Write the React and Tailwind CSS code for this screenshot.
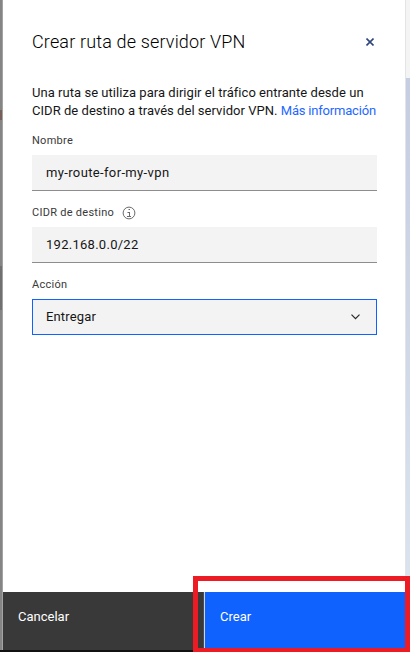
import React from "react";

function Label({ children }) {
  return <div className="flex h-[15px] items-center whitespace-nowrap text-[11px] leading-[15px] tracking-[0.27px] text-[#393939]">{children}</div>;
}

function InfoIcon() {
  return (
    <svg className="ml-[8px] h-[14px] w-[14px]" viewBox="0 0 14 14" fill="none" stroke="#6b6b6b" strokeWidth="1">
      <circle cx="7" cy="7" r="5.9" />
      <path d="M5.5 6.5h2M7.5 6v4M5 10.5h4M6.5 3.5h1.5" />
    </svg>
  );
}

export default function App() {
  return (
    <div className="relative flex h-[652px] w-[410px] flex-col overflow-hidden bg-white font-['Roboto',sans-serif] text-[#161616]">
      <div className="flex h-[650px]">
        <div className="flex w-[3px] shrink-0 flex-col border-r border-[#a3a3a3] bg-[#858585]">
          <div className="mt-[110px] h-[10px] w-[2px] bg-[#77605a]" />
          <div className="mt-[146px] h-[44px] w-[2px] bg-[#707070]" />
        </div>
        <div className="flex w-[402px] shrink-0 flex-col">
          <main className="flex h-[592px] flex-col pl-[29px] pr-[28px] pt-[30px]">
            <header className="flex h-[24px] items-center justify-between">
              <h1 className="whitespace-nowrap text-[18px] font-light leading-[24px] tracking-[0.16px] text-black">Crear ruta de servidor VPN</h1>
              <svg className="mr-[3px] h-[8px] w-[8px]" viewBox="0 0 8 8" stroke="#2f477c" strokeWidth="1.6">
                <path d="M0.5 0.5l7 7M7.5 0.5l-7 7" />
              </svg>
            </header>
            <div className="mt-[30px] whitespace-nowrap text-[13px] leading-[18px] tracking-[0.04px]">
              <p>Una ruta se utiliza para dirigir el tráfico entrante desde un</p>
              <p>CIDR de destino a través del servidor VPN. <a className="tracking-[-0.2px] text-[#2467ff]">Más información</a></p>
            </div>
            <div className="mt-[13px]">
              <Label><span>Nombre</span></Label>
              <div className="mt-[7px] flex h-[36px] items-center border-b border-[#8d8d8d] bg-[#f3f3f3] pl-[14px] text-[13px]">
                <span className="tracking-[0.36px]">my-route-for-my-vpn</span>
              </div>
            </div>
            <div className="mt-[14px]">
              <Label><span>CIDR de destino</span><InfoIcon /></Label>
              <div className="mt-[7px] flex h-[36px] items-center border-b border-[#8d8d8d] bg-[#f3f3f3] pl-[14px] text-[13px]">
                <span className="tracking-[0.27px]">192.168.0.0/22</span>
              </div>
            </div>
            <div className="mt-[14px]">
              <Label><span>Acción</span></Label>
              <div className="mt-[7px] flex h-[36px] items-center justify-between border border-[#0f62fe] bg-[#f3f3f3] pl-[13px] pr-[16px] text-[13px]">
                <span className="tracking-[0.15px]">Entregar</span>
                <svg className="h-[6px] w-[9px]" viewBox="0 0 9 6" fill="none" stroke="#262626" strokeWidth="1.2">
                  <path d="M0.5 0.7l4 4 4-4" />
                </svg>
              </div>
            </div>
          </main>
          <footer className="flex h-[58px] w-[407px] text-[13px] leading-[18px] text-white">
            <div className="w-[201px] border-r border-[#4c4c4c] bg-[#393939] pl-[15px] pt-[16px]"><span>Cancelar</span></div>
            <div className="w-[206px] border-l border-[#d0d4dc] bg-[#0f62fe] pl-[15px] pt-[16px]"><span>Crear</span></div>
          </footer>
        </div>
        <div className="flex w-[5px] shrink-0 flex-col border-l border-[#e2e4e8] bg-[#f4f4f4]">
          <div className="mt-[78px] grow bg-linear-to-b from-[#c5cde2] to-[#dde6f0]" />
        </div>
      </div>
      <div className="h-[2px] bg-[#111111]" />
      <div className="absolute left-[193px] top-[576px] h-[76px] w-[217px] border-b-4 border-l-5 border-r-5 border-t-5 border-[#ed1c24]" />
    </div>
  );
}
